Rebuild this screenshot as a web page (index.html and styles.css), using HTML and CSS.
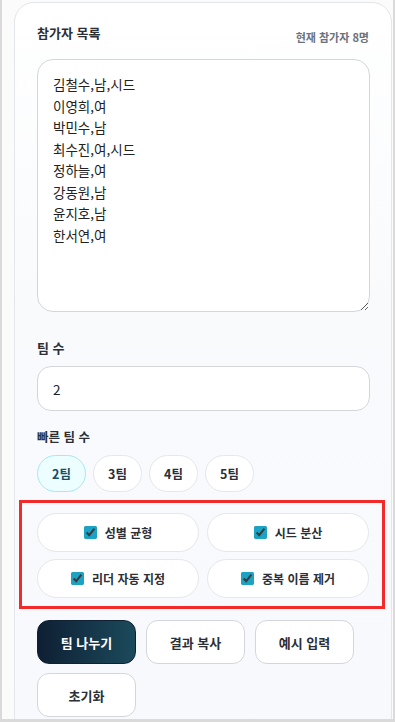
FILE: index.html
```html
<!DOCTYPE html>
<html lang="ko">
<head>
    <meta charset="UTF-8">
    <meta name="viewport" content="width=device-width, initial-scale=1.0">
    <title>팀 나누기</title>
    <link rel="stylesheet" href="styles.css">
</head>
<body>
    <div class="frame">
        <div class="card">
            <div class="card-header">
                <h2 class="title">참가자 목록</h2>
                <span class="count">현재 참가자 8명</span>
            </div>

            <textarea class="names">김철수,남,시드
이영희,여
박민수,남
최수진,여,시드
정하늘,여
강동원,남
윤지호,남
한서연,여</textarea>

            <label class="label">팀 수</label>
            <input class="team-input" type="text" value="2">

            <div class="label small">빠른 팀 수</div>
            <div class="chips">
                <button class="chip active">2팀</button>
                <button class="chip">3팀</button>
                <button class="chip">4팀</button>
                <button class="chip">5팀</button>
            </div>

            <div class="options">
                <label class="option"><input type="checkbox" checked> 성별 균형</label>
                <label class="option"><input type="checkbox" checked> 시드 분산</label>
                <label class="option"><input type="checkbox" checked> 리더 자동 지정</label>
                <label class="option"><input type="checkbox" checked> 중복 이름 제거</label>
            </div>

            <div class="actions">
                <button class="btn primary">팀 나누기</button>
                <button class="btn">결과 복사</button>
                <button class="btn">예시 입력</button>
                <button class="btn">초기화</button>
            </div>
        </div>
    </div>
</body>
</html>
```

FILE: styles.css
```css
* {
    margin: 0;
    padding: 0;
    box-sizing: border-box;
}

html, body {
    height: 100%;
    overflow: hidden;
}

body {
    background: #fff;
    font-family: "Noto Sans CJK KR", "Noto Sans", sans-serif;
    color: #2b2f36;
}

.frame {
    height: 722px;
    border-left: 2px solid #dadada;
    border-right: 2px solid #dadada;
    border-bottom: 3px solid #dadada;
    padding: 2px 0 0 12px;
    overflow: hidden;
    background: #fbfbfb;
}

.card {
    width: 378px;
    height: 760px;
    border: 1px solid #e3e6ea;
    border-radius: 20px;
    background: linear-gradient(180deg, #ffffff 0%, #f8fafc 40%, #f7f9fc 100%);
    padding: 20px 22px 0 22px;
}

.card-header {
    display: flex;
    justify-content: space-between;
    align-items: flex-start;
    height: 20px;
}

.title {
    font-size: 13px;
    font-weight: 700;
    line-height: 20px;
    color: #2b2f36;
}

.count {
    font-size: 11px;
    font-weight: 600;
    color: #6b7280;
    padding-top: 8px;
    line-height: 12px;
}

.names {
    display: block;
    width: 333px;
    height: 253px;
    margin-top: 16px;
    padding: 14px 15px;
    border: 1px solid #d3d6db;
    border-radius: 16px;
    background: #fff;
    font-family: "Noto Sans CJK KR", "Noto Sans", sans-serif;
    font-size: 13.5px;
    line-height: 21.5px;
    color: #222;
    outline: none;
}

.label {
    display: block;
    margin-top: 27px;
    font-size: 13px;
    font-weight: 700;
    line-height: 18px;
    color: #2b2f36;
}

.label.small {
    margin-top: 17px;
    font-size: 12.5px;
}

.team-input {
    display: block;
    width: 333px;
    height: 45px;
    margin-top: 9px;
    padding: 0 15px;
    border: 1px solid #d3d6db;
    border-radius: 14px;
    background: #fff;
    font-family: "Noto Sans CJK KR", "Noto Sans", sans-serif;
    font-size: 13.5px;
    color: #222;
    outline: none;
}

.chips {
    display: flex;
    gap: 7px;
    margin-top: 9px;
}

.chip {
    width: 49px;
    height: 37px;
    border: 1px solid #e5e7eb;
    border-radius: 19px;
    background: #fff;
    font-family: inherit;
    font-size: 12.5px;
    font-weight: 700;
    color: #2b2f36;
}

.chip.active {
    background: #ecfeff;
    border-color: #a5e9f5;
    color: #164e63;
}

.options {
    position: relative;
    display: grid;
    grid-template-columns: 1fr 1fr;
    gap: 7px 8px;
    margin-top: 21px;
}

/* 표시용 빨간 박스 */
.options::after {
    content: "";
    position: absolute;
    top: -13px;
    left: -18px;
    right: -16px;
    bottom: -11px;
    border: 3px solid #f22a2a;
    pointer-events: none;
}

.option {
    display: flex;
    justify-content: center;
    align-items: center;
    gap: 8px;
    height: 39px;
    border: 1px solid #e5e7eb;
    border-radius: 20px;
    background: #fff;
    font-size: 12px;
    font-weight: 700;
    color: #2b2f36;
}

.option input {
    width: 13px;
    height: 13px;
    accent-color: #1aa3c4;
}

.actions {
    display: flex;
    flex-wrap: wrap;
    gap: 9px 10px;
    margin-top: 22px;
}

.btn {
    width: 99px;
    height: 44px;
    border: 1px solid #d3d6db;
    border-radius: 12px;
    background: #fff;
    font-family: inherit;
    font-size: 13px;
    font-weight: 700;
    color: #2b2f36;
}

.btn.primary {
    border-color: #0f2133;
    background: linear-gradient(90deg, #0f1f33 0%, #1b4a5c 100%);
    color: #fff;
}
```
